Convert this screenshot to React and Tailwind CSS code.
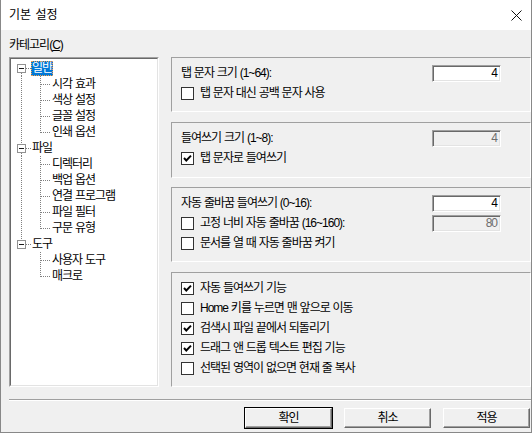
import React from "react";

const FONT = { fontFamily: '"Liberation Sans", "Noto Sans CJK KR", sans-serif' };

// tree rows: root rows carry an expander, child rows hang off the root line
const treeRows = [
  { label: "일반", root: true, first: true, next: true, selected: true },
  { label: "시각 효과", cont: true },
  { label: "색상 설정", cont: true },
  { label: "글꼴 설정", cont: true },
  { label: "인쇄 옵션", cont: true, last: true },
  { label: "파일", root: true, next: true },
  { label: "디렉터리", cont: true },
  { label: "백업 옵션", cont: true },
  { label: "연결 프로그램", cont: true },
  { label: "파일 필터", cont: true },
  { label: "구문 유형", cont: true, last: true },
  { label: "도구", root: true },
  { label: "사용자 도구" },
  { label: "매크로", last: true },
];

const DOT = { stroke: "#808080", strokeWidth: 1, strokeDasharray: "1 1", shapeRendering: "crispEdges" };

const Guide = ({ row }) => {
  if (row.root) {
    return (
      <svg width="20" height="16" className="shrink-0">
        {!row.first && <line x1="10.5" y1="0" x2="10.5" y2="4" style={DOT} />}
        {row.next && <line x1="10.5" y1="13" x2="10.5" y2="16" style={DOT} />}
        <line x1="15" y1="8.5" x2="20" y2="8.5" style={DOT} />
        <rect x="6.5" y="4.5" width="8" height="8" fill="#fff" stroke="#919191" shapeRendering="crispEdges" />
        <line x1="8" y1="8.5" x2="13" y2="8.5" stroke="#1a1a1a" shapeRendering="crispEdges" />
      </svg>
    );
  }
  return (
    <svg width="40" height="16" className="shrink-0">
      {row.cont && <line x1="10.5" y1="0" x2="10.5" y2="16" style={DOT} />}
      <line x1="29.5" y1="0" x2="29.5" y2={row.last ? 9 : 16} style={DOT} />
      <line x1="30" y1="8.5" x2="40" y2="8.5" style={DOT} />
    </svg>
  );
};

const Checkbox = ({ checked }) => (
  <span className="w-[13px] h-[13px] shrink-0 bg-white border border-[#333333] flex items-center justify-center">
    {checked && (
      <svg width="11" height="11" viewBox="0 0 11 11">
        <path d="M2 5 L4.3 7.5 L9 2.6" fill="none" stroke="#000" strokeWidth="1.9" />
      </svg>
    )}
  </span>
);

const CheckRow = ({ checked, children }) => (
  <div className="flex items-center gap-[6px]">
    <Checkbox checked={checked} />
    <span>{children}</span>
  </div>
);

const NumBox = ({ value, disabled }) => (
  <div
    className={`w-[69px] h-[17px] border border-[#a0a0a0] border-b-white border-r-white shadow-[inset_1px_1px_0_#696969,inset_-1px_-1px_0_#e3e3e3] flex items-center justify-end pr-[3px] text-[12px] ${
      disabled ? "bg-[#f0f0f0] text-[#6d6d6d]" : "bg-white text-black"
    }`}
  >
    {value}
  </div>
);

const Group = ({ className, children }) => (
  <div className={`border border-[#a0a0a0] border-b-white border-r-white pl-[9px] pr-[29px] pt-[5px] ${className}`}>
    {children}
  </div>
);

const Row = ({ children }) => <div className="flex h-5 items-center justify-between">{children}</div>;

const Button = ({ children, isDefault }) => (
  <div className={`w-[89px] h-[22px] ${isDefault ? "border border-black" : "border border-transparent"}`}>
    <button
      type="button"
      className="w-full h-full bg-[#f0f0f0] border border-t-white border-l-white border-r-[#696969] border-b-[#696969] shadow-[inset_-1px_-1px_0_#a0a0a0] flex items-center justify-center text-[12px] text-black"
    >
      {children}
    </button>
  </div>
);

export default function App() {
  return (
    <div
      className="w-[532px] h-[433px] bg-[#f0f0f0] border-x border-b border-[#888888] flex flex-col text-[12px] text-black tracking-[-1px] [word-spacing:0.5px]"
      style={FONT}
    >
      {/* title bar */}
      <div className="h-[30px] bg-white flex items-center justify-between pl-[8px] pr-[9px] shrink-0">
        <span className="text-[12px] tracking-normal [word-spacing:1px]">기본 설정</span>
        <svg width="11" height="11" viewBox="0 0 11 11">
          <path d="M0.5 0.5 L10.5 10.5 M10.5 0.5 L0.5 10.5" stroke="#111" strokeWidth="1" />
        </svg>
      </div>

      <div className="flex flex-col pl-[8px] pt-[8px]">
        <div className="h-[14px] leading-[14px] mb-[5px]">
          카테고리(<span className="underline">C</span>)
        </div>

        <div className="flex h-[330px] gap-[12px]">
          {/* category tree */}
          <div className="w-[150px] h-full border border-[#a0a0a0] border-b-white border-r-white">
            <div className="h-full bg-white border border-[#696969] border-b-[#e3e3e3] border-r-[#e3e3e3] pt-px">
              {treeRows.map((row) => (
                <div key={row.label} className="flex h-4 items-center">
                  <Guide row={row} />
                  <span
                    className={`h-[15px] leading-[15px] px-px whitespace-nowrap ${
                      row.selected
                        ? "bg-[#0078d7] text-white outline outline-1 outline-dotted outline-[#f0a050] -outline-offset-1"
                        : ""
                    }`}
                  >
                    {row.label}
                  </span>
                </div>
              ))}
            </div>
          </div>

          {/* option groups */}
          <div className="w-[360px] flex flex-col">
            <Group className="h-[55px]">
              <Row>
                <span>탭 문자 크기 (1~64):</span>
                <NumBox value="4" />
              </Row>
              <Row>
                <CheckRow>탭 문자 대신 공백 문자 사용</CheckRow>
              </Row>
            </Group>

            <Group className="h-[56px] mt-[10px]">
              <Row>
                <span>들여쓰기 크기 (1~8):</span>
                <NumBox value="4" disabled />
              </Row>
              <Row>
                <CheckRow checked>탭 문자로 들여쓰기</CheckRow>
              </Row>
            </Group>

            <Group className="h-[75px] mt-[9px]">
              <Row>
                <span>자동 줄바꿈 들여쓰기 (0~16):</span>
                <NumBox value="4" />
              </Row>
              <Row>
                <CheckRow>고정 너비 자동 줄바꿈 (16~160):</CheckRow>
                <NumBox value="80" disabled />
              </Row>
              <Row>
                <CheckRow>문서를 열 때 자동 줄바꿈 켜기</CheckRow>
              </Row>
            </Group>

            <Group className="flex-1 mt-[10px]">
              <Row>
                <CheckRow checked>자동 들여쓰기 기능</CheckRow>
              </Row>
              <Row>
                <CheckRow>Home 키를 누르면 맨 앞으로 이동</CheckRow>
              </Row>
              <Row>
                <CheckRow checked>검색시 파일 끝에서 되돌리기</CheckRow>
              </Row>
              <Row>
                <CheckRow checked>드래그 앤 드롭 텍스트 편집 기능</CheckRow>
              </Row>
              <Row>
                <CheckRow>선택된 영역이 없으면 현재 줄 복사</CheckRow>
              </Row>
            </Group>
          </div>
        </div>

        {/* separator */}
        <div className="mt-[12px] border-t border-b border-t-[#a0a0a0] border-b-white" />

        <div className="flex justify-end gap-[10px] mt-[6px]">
          <Button isDefault>확인</Button>
          <Button>취소</Button>
          <Button>적용</Button>
        </div>
      </div>
    </div>
  );
}
